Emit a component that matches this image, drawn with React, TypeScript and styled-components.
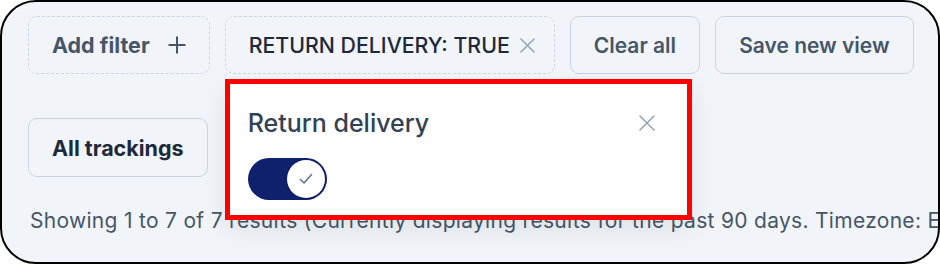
import React from "react";
import styled, { createGlobalStyle } from "styled-components";

const Global = createGlobalStyle`
  html, body { margin: 0; padding: 0; background: #ffffff; }
  body { font-family: Inter, "Noto Sans", "Liberation Sans", sans-serif; -webkit-font-smoothing: antialiased; }
  * { box-sizing: border-box; }
`;

const Frame = styled.div`
  width: 940px;
  height: 264px;
  border: 2px solid #000000;
  border-radius: 36px;
  background: #f1f5f9;
  overflow: hidden;
  padding: 14px 26px 0 26px;
  display: flex;
  flex-direction: column;
`;

const Toolbar = styled.div`
  display: flex;
  gap: 15px;
  align-items: stretch;
`;

const Button = styled.button<{ $dashed?: boolean; $bold?: boolean }>`
  position: relative;
  height: 58px;
  display: inline-flex;
  align-items: center;
  padding: 0 23px;
  border: 1px ${(p) => (p.$dashed ? "dashed" : "solid")} #cbd5e1;
  border-radius: 9px;
  background: #f1f5f9;
  font-family: Inter, "Noto Sans", sans-serif;
  font-size: ${(p) => (p.$bold ? "21.5px" : "21px")};
  font-weight: ${(p) => (p.$bold ? 700 : 600)};
  color: #475569;
  cursor: pointer;
  white-space: nowrap;
`;

const ChipButton = styled(Button)`
  padding: 0 19px 0 23px;
  font-size: 21.3px;
  font-weight: 500;
  color: #1e293b;
`;

const DarkButton = styled(Button)`
  height: 59px;
  color: #1e293b;
`;

const IconWrap = styled.span<{ $gap: number }>`
  display: inline-flex;
  margin-left: ${(p) => p.$gap}px;
`;

const SecondRow = styled.div`
  display: flex;
  margin-top: 44px;
`;

const Summary = styled.div`
  margin-top: 29px;
  margin-left: 2px;
  font-size: 21px;
  letter-spacing: 0.3px;
  line-height: 30px;
  color: #475569;
  white-space: nowrap;
`;

const Popover = styled.div`
  position: absolute;
  top: 62px;
  left: -1px;
  width: 467px;
  height: 141px;
  background: #ffffff;
  border: 5px solid #ff0000;
  box-shadow: 0 10px 24px rgba(15, 23, 42, 0.08);
  padding: 24px 32px 0 18px;
  display: flex;
  flex-direction: column;
  cursor: default;
  z-index: 10;
`;

const PopoverHeader = styled.div`
  display: flex;
  justify-content: space-between;
  align-items: center;
`;

const PopoverTitle = styled.span`
  font-size: 25px;
  font-weight: 500;
  color: #334155;
  line-height: 30px;
`;

const Toggle = styled.span`
  margin-top: 20px;
  width: 79px;
  height: 42px;
  border-radius: 21px;
  background: #0f206d;
  display: flex;
  align-items: center;
  justify-content: flex-end;
  padding: 2px;
`;

const Knob = styled.span`
  width: 38px;
  height: 38px;
  border-radius: 50%;
  background: #ffffff;
  box-shadow: 0 1px 3px rgba(0, 0, 0, 0.15);
  display: flex;
  align-items: center;
  justify-content: center;
`;

const PlusIcon = () => (
  <svg width="18" height="18" viewBox="0 0 18 18" fill="none">
    <path d="M9 0.5v17M0.5 9h17" stroke="#475569" strokeWidth="2" strokeLinecap="butt" />
  </svg>
);

const CrossIcon = ({ size, color, width }: { size: number; color: string; width: number }) => (
  <svg width={size} height={size} viewBox="0 0 16 16" fill="none">
    <path d="M1 1l14 14M15 1L1 15" stroke={color} strokeWidth={width} strokeLinecap="round" />
  </svg>
);

const CheckIcon = () => (
  <svg width="14" height="12" viewBox="0 0 14 12" fill="none">
    <path d="M1.5 6.5l3.5 3.5L12.5 1.5" stroke="#64748b" strokeWidth="1.6" strokeLinecap="round" strokeLinejoin="round" />
  </svg>
);

export default function App() {
  return (
    <>
      <Global />
      <Frame>
        <Toolbar>
          <Button $dashed $bold>
            Add filter
            <IconWrap $gap={18}>
              <PlusIcon />
            </IconWrap>
          </Button>
          <ChipButton as="div" $dashed>
            RETURN DELIVERY: TRUE
            <IconWrap $gap={10}>
              <CrossIcon size={15} color="#94a3b8" width={1.6} />
            </IconWrap>
            <Popover>
              <PopoverHeader>
                <PopoverTitle>Return delivery</PopoverTitle>
                <CrossIcon size={16} color="#94a3b8" width={1.5} />
              </PopoverHeader>
              <Toggle>
                <Knob>
                  <CheckIcon />
                </Knob>
              </Toggle>
            </Popover>
          </ChipButton>
          <Button>Clear all</Button>
          <Button>Save new view</Button>
        </Toolbar>
        <SecondRow>
          <DarkButton $bold>All trackings</DarkButton>
        </SecondRow>
        <Summary>
          Showing 1 to 7 of 7 results (Currently displaying results for the past 90 days. Timezone: Europe/Berlin)
        </Summary>
      </Frame>
    </>
  );
}
